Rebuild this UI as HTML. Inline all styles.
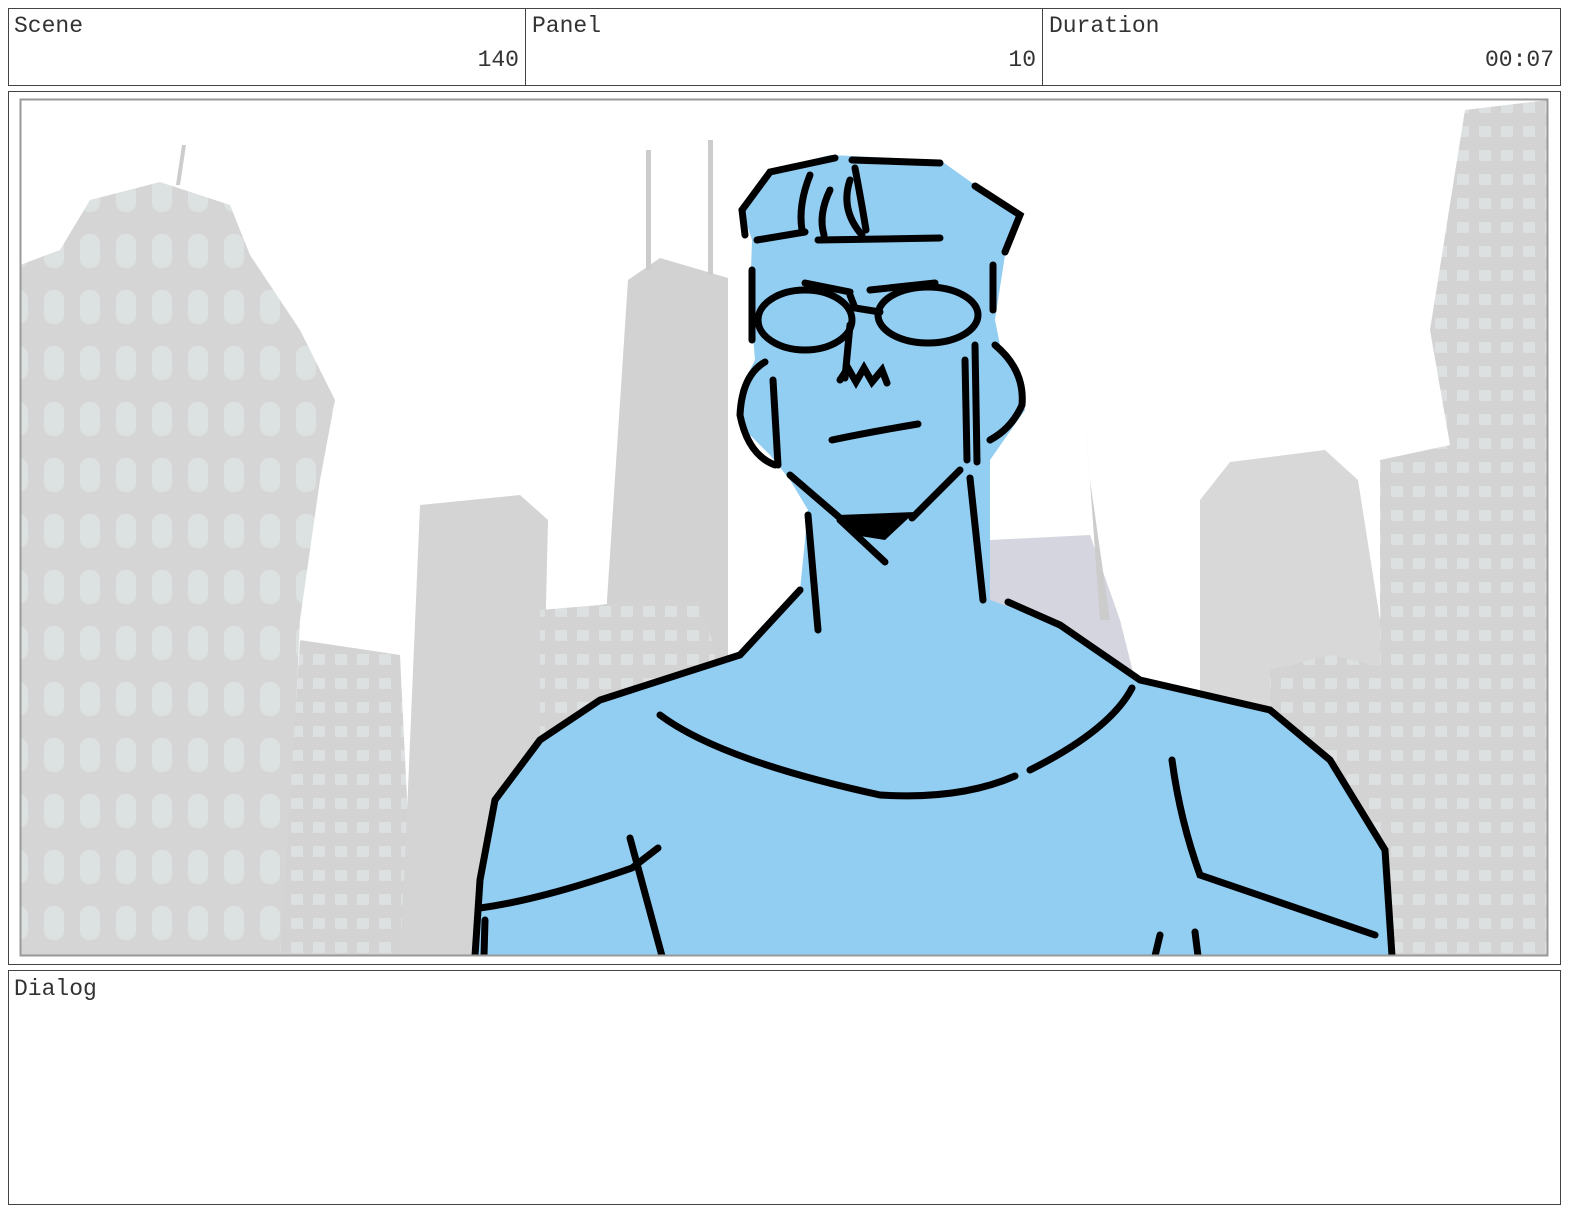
<!DOCTYPE html>
<html><head><meta charset="utf-8"><style>
html,body{margin:0;padding:0;background:#fff;}
body{width:1584px;height:1224px;position:relative;overflow:hidden;font-family:"Liberation Mono",monospace;color:#333;}
.box{position:absolute;border:1px solid #444;box-sizing:border-box;}
.lbl{position:absolute;font-size:23px;}
</style></head><body>
<div class="box" style="left:8px;top:8px;width:1553px;height:78px;"></div>
<div style="position:absolute;left:525px;top:8px;width:1px;height:78px;background:#444"></div>
<div style="position:absolute;left:1042px;top:8px;width:1px;height:78px;background:#444"></div>
<div class="lbl" style="left:14px;top:13px">Scene</div>
<div class="lbl" style="left:532px;top:13px">Panel</div>
<div class="lbl" style="left:1049px;top:13px">Duration</div>
<div class="lbl" style="right:1065px;top:47px">140</div>
<div class="lbl" style="right:548px;top:47px">10</div>
<div class="lbl" style="right:30px;top:47px">00:07</div>

<div class="box" style="left:8px;top:91px;width:1553px;height:874px;"></div>
<div class="box" style="left:8px;top:970px;width:1553px;height:235px;"></div>
<div class="lbl" style="left:14px;top:976px">Dialog</div>

<svg style="position:absolute;left:0;top:0" width="1584" height="1224" viewBox="0 0 1584 1224">
<defs>
<clipPath id="c"><rect x="21" y="100" width="1526" height="855"/></clipPath>
<pattern id="w" width="36" height="56" patternUnits="userSpaceOnUse"><rect width="36" height="56" fill="#d5d5d5"/><rect x="8" y="10" width="20" height="34" rx="9" fill="#dce1e1"/></pattern>
<pattern id="w2" width="22" height="24" patternUnits="userSpaceOnUse"><rect width="22" height="24" fill="#d3d3d3"/><rect x="5" y="6" width="12" height="11" fill="#dce0e0"/></pattern>
</defs>
<g clip-path="url(#c)">
<rect x="20" y="99" width="1528" height="857" fill="#fff"/>
<path d="M20 265 L60 250 L90 200 L160 182 L230 205 L250 255 L300 330 L335 400 L320 480 L300 620 L290 850 L285 956 L20 956Z" fill="url(#w)"/>
<path d="M182 145 L186 145 L180 185 L176 185Z" fill="#ccc"/>
<path d="M300 640 L400 655 L410 860 L400 956 L280 956Z" fill="url(#w2)"/>
<path d="M420 505 L520 495 L548 520 L540 860 L520 956 L400 956 L405 860Z" fill="#d4d4d4"/>
<path d="M607 600 L628 280 L660 258 L728 278 L728 680 L607 680Z" fill="#d2d2d2"/>
<rect x="646" y="150" width="5" height="120" fill="#ccc"/><rect x="708" y="140" width="5" height="135" fill="#ccc"/>
<path d="M540 610 L600 605 L640 598 L700 602 L715 650 L715 956 L540 956Z" fill="url(#w2)"/>
<path d="M1200 500 L1230 462 L1325 450 L1358 480 L1380 620 L1380 956 L1200 956Z" fill="#d8d8d8"/>
<path d="M1270 670 L1330 655 L1395 670 L1400 956 L1270 956Z" fill="url(#w2)"/>
<path d="M990 540 L1090 535 L1120 620 L1140 700 L1140 956 L990 956Z" fill="#d4d5de"/>
<path d="M1082 370 L1090 480 L1110 620 L1100 620Z" fill="#ccc"/>
<path d="M1380 460 L1450 445 L1430 330 L1465 110 L1548 100 L1548 956 L1390 956 L1380 700Z" fill="url(#w2)"/>
<path d="M475 956 L480 880 L495 800 L540 740 L600 700 L740 655 L800 590 L808 510 L790 480 L770 455 L745 430 L740 390 L755 360 L750 300 L752 240 L742 210 L770 170 L830 155 L940 160 L975 185 L1020 215 L1005 255 L995 320 L1000 345 L1020 375 L1025 410 L990 460 L990 600 L1060 625 L1140 680 L1270 710 L1330 760 L1385 850 L1395 956Z" fill="#92cdf2"/>
<g fill="none" stroke="#000" stroke-width="7" stroke-linecap="round">
<path d="M745 235 L742 210 L770 172 L835 158"/>
<path d="M852 160 L940 163"/><path d="M975 186 L1020 215 L1005 252"/>
<path d="M757 240 L805 232"/><path d="M818 240 L940 238"/>
<path d="M810 175 Q798 205 802 230"/><path d="M830 190 Q818 215 824 235"/>
<path d="M850 180 Q840 210 862 235"/><path d="M855 168 Q862 205 866 230"/>
<path d="M752 270 L752 340"/><path d="M993 265 L993 310"/>
<ellipse cx="805" cy="320" rx="47" ry="30"/><ellipse cx="928" cy="315" rx="50" ry="28"/>
<path d="M805 283 L850 292"/><path d="M850 295 L855 308 L880 312"/><path d="M935 283 L870 290"/>
<path d="M850 325 L845 378"/><path d="M840 380 L848 368 L856 382 L864 368 L872 382 L882 370 L887 383"/>
<path d="M832 440 Q870 432 918 424"/>
<path d="M765 362 Q742 375 740 415 Q748 455 775 465"/>
<path d="M773 380 L778 465"/><path d="M965 360 L967 460"/><path d="M975 345 L977 462"/>
<path d="M995 345 Q1025 370 1022 405 Q1012 428 990 440"/>
<path d="M790 475 L840 518"/><path d="M960 470 L912 518"/>
<path d="M840 520 L885 562"/>
<path d="M808 515 L818 630"/><path d="M970 478 L983 600"/>
<path d="M800 590 L740 655 L600 700 L540 740 L495 800 L480 880 L475 956"/>
<path d="M1008 602 L1060 625 L1140 680 L1270 710 L1330 760 L1385 850 L1392 956"/>
<path d="M660 715 Q720 760 880 795 Q960 800 1015 776"/>
<path d="M1030 770 Q1110 730 1132 688"/>
<path d="M480 908 Q540 900 632 868 L658 848"/><path d="M630 838 L662 956"/>
<path d="M1172 760 Q1180 820 1200 875 L1375 935"/>
<path d="M1160 935 L1155 956"/><path d="M1195 932 L1198 956"/><path d="M485 920 L484 956"/>
</g>
<path d="M838 515 L915 512 L885 540 L860 536Z" fill="#000"/>
</g>
<rect x="20.5" y="99.5" width="1527" height="856" fill="none" stroke="#999" stroke-width="2"/>
</svg>
</body></html>
